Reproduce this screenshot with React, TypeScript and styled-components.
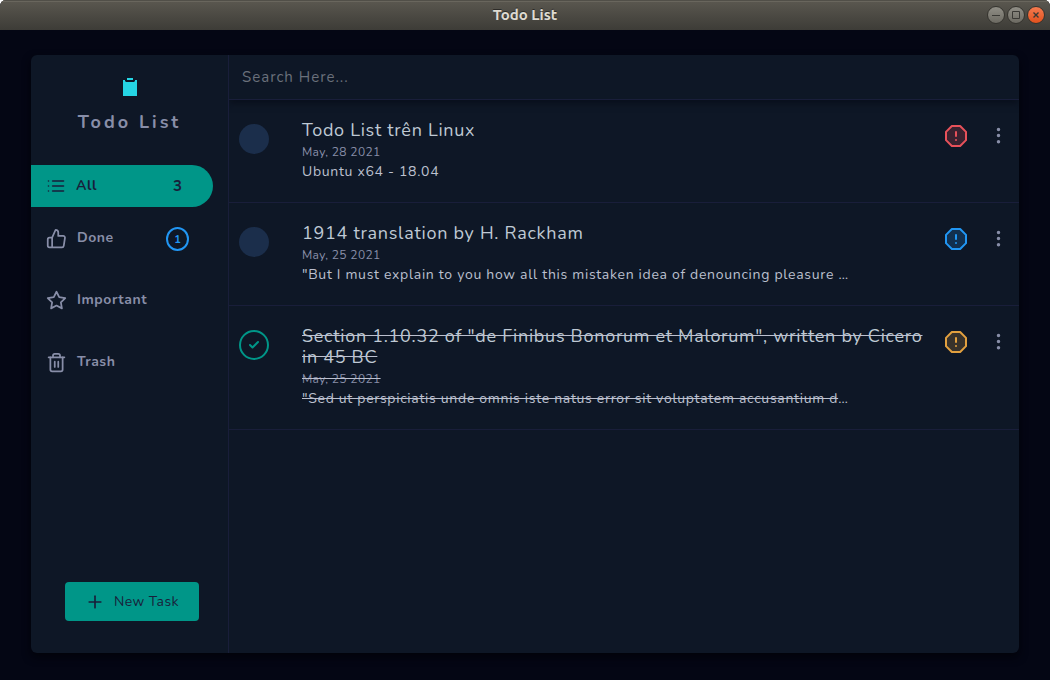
import React from "react";
import styled, { createGlobalStyle, css } from "styled-components";
import {
  FiAlertOctagon,
  FiCheck,
  FiList,
  FiMoreVertical,
  FiPlus,
  FiStar,
  FiThumbsUp,
  FiTrash2,
} from "react-icons/fi";

const GlobalStyle = createGlobalStyle`
  *, *::before, *::after { box-sizing: border-box; }
  body {
    margin: 0;
    background: #fff;
    font-family: Nunito, Lato, "Noto Sans", sans-serif;
    font-size: 14px;
    letter-spacing: 0.04em;
    color: #bcc0cf;
  }
  button, input { font: inherit; letter-spacing: inherit; color: inherit; }
  button { border: 0; padding: 0; background: none; cursor: pointer; }
  h1, h2, p, ul { margin: 0; padding: 0; }
  ul { list-style: none; }
`;

const Window = styled.div`
  display: flex;
  flex-direction: column;
  min-height: 100vh;
  border-radius: 6px 6px 0 0;
  overflow: hidden;
  background: #040614;
`;

const TitleBar = styled.header`
  display: grid;
  grid-template-columns: 1fr auto 1fr;
  align-items: center;
  height: 30px;
  padding: 0 5px;
  background: linear-gradient(#5b5850, #3d3c37);
  box-shadow: inset 0 1px #514f48, inset 0 2px #69665d;
`;

const WindowTitle = styled.span`
  grid-column: 2;
  font: bold 15px/30px Ubuntu, "Noto Sans", sans-serif;
  letter-spacing: 0;
  color: #dfdbd2;
  text-shadow: 0 -1px #2c2b28;
`;

const WindowControls = styled.div`
  display: flex;
  justify-content: flex-end;
  gap: 2px;
`;

const WindowButton = styled.button<{ $close?: boolean }>`
  display: grid;
  place-items: center;
  width: 18px;
  height: 18px;
  border: 1px solid #35342f;
  border-radius: 50%;
  color: #3a3935;
  background: ${(p) =>
    p.$close ? "linear-gradient(#f47b50, #e2511d)" : "linear-gradient(#908e86, #6c6a62)"};
`;

const Stage = styled.main`
  display: flex;
  flex: 1;
  padding: 25px 31px 27px;
`;

const Panel = styled.div`
  display: flex;
  flex: 1;
  min-width: 0;
  border-radius: 6px;
  overflow: hidden;
  background: #0e1726;
  box-shadow: 0 4px 8px #02030a;
`;

const Sidebar = styled.aside`
  display: flex;
  flex-direction: column;
  flex: 0 0 198px;
  border-right: 1px solid #191e3a;
`;

const Brand = styled.div`
  display: flex;
  flex-direction: column;
  align-items: center;
  gap: 14px;
  padding: 23px 0 9px;
`;

const BrandName = styled.h1`
  font-size: 18px;
  line-height: 24px;
  font-weight: 700;
  letter-spacing: 3px;
  color: #888ea8;
`;

const NavList = styled.ul`
  display: flex;
  flex-direction: column;
  gap: 20px;
  padding: 22px 15px 0 0;
  li:first-child { margin-bottom: -9px; }
`;

const NavLabel = styled.span`
  flex: 1;
  line-height: 20px;
  padding-bottom: 2px;
`;

const NavItem = styled.button<{ $active?: boolean }>`
  display: flex;
  align-items: center;
  width: 100%;
  height: 42px;
  padding: 0 24px 0 15px;
  gap: 10px;
  font-weight: 700;
  text-align: left;
  color: #888ea8;
  > svg { flex: none; margin-bottom: 1px; }
  ${(p) =>
    p.$active &&
    css`
      border-radius: 0 21px 21px 0;
      background: #009688;
      color: #191e3a;
      > svg { margin-bottom: 0; }
      ${NavLabel} { padding-bottom: 0; }
    `}
`;

const Count = styled.span`
  width: 23px;
  text-align: center;
  font-size: 15px;
  letter-spacing: 0;
`;

const Badge = styled.span`
  display: grid;
  place-items: center;
  width: 23px;
  height: 24px;
  border: 2px solid #2196f3;
  border-radius: 50%;
  font-size: 11px;
  letter-spacing: 0;
  color: #2196f3;
`;

const NewTask = styled.button`
  display: flex;
  align-items: center;
  justify-content: center;
  gap: 9px;
  width: 134px;
  height: 39px;
  margin: auto 0 32px 34px;
  border-radius: 4px;
  background: #009688;
  letter-spacing: 0.03em;
  color: #191e3a;
`;

const Content = styled.section`
  flex: 1;
  min-width: 0;
  overflow: hidden;
`;

const SearchBar = styled.div`
  height: 45px;
  border-bottom: 1px solid #191e3a;
  box-shadow: 0 4px 6px #0a101d;
`;

const SearchInput = styled.input`
  display: block;
  width: 100%;
  height: 44px;
  padding: 0 13px;
  border: 0;
  outline: 0;
  background: transparent;
  font-size: 15px;
  letter-spacing: 1px;
  &::placeholder { color: #6a707b; opacity: 1; }
`;

const TaskRow = styled.li`
  display: flex;
  align-items: flex-start;
  padding: 20px 10px 22px;
  border-bottom: 1px solid #191e3a;
`;

const TickBox = styled.label`
  display: grid;
  flex: none;
  margin: 4px 33px 0 0;
  > * { grid-area: 1 / 1; place-self: center; }
`;

const Tick = styled.input`
  appearance: none;
  width: 30px;
  height: 30px;
  margin: 0;
  border-radius: 50%;
  background: #1b2e4b;
  cursor: pointer;
  & + svg { visibility: hidden; color: #009688; pointer-events: none; }
  &:checked { border: 2px solid #009688; background: transparent; }
  &:checked + svg { visibility: visible; }
`;

const TaskBody = styled.div<{ $done: boolean }>`
  flex: 1;
  min-width: 0;
  text-decoration: ${(p) => (p.$done ? "line-through" : "none")};
`;

const TaskTitle = styled.h2`
  font-size: 18px;
  line-height: 21px;
  font-weight: 400;
  letter-spacing: 0.04em;
  color: #bfc9d4;
`;

const TaskDate = styled.p`
  font-size: 12px;
  line-height: 22px;
  letter-spacing: 0.03em;
  color: #888ea8;
`;

const TaskText = styled.p`
  line-height: 17px;
  letter-spacing: 0.05em;
`;

const Ellipsis = styled.span`
  display: inline-block;
`;

const Actions = styled.div`
  display: flex;
  flex: none;
  align-items: center;
  gap: 20px;
  margin: 4px 0 0 16px;
`;

const Priority = styled.button<{ $color: string }>`
  display: grid;
  color: ${(p) => p.$color};
  svg { fill: ${(p) => p.$color}33; }
`;

const MenuButton = styled.button`
  display: grid;
  padding-bottom: 1px;
  color: #888ea8;
`;

type Task = {
  title: string;
  date: string;
  text: string;
  cut?: boolean;
  done: boolean;
  color: string;
};

const tasks: Task[] = [
  {
    title: "Todo List trên Linux",
    date: "May, 28 2021",
    text: "Ubuntu x64 - 18.04",
    done: false,
    color: "#e7515a",
  },
  {
    title: "1914 translation by H. Rackham",
    date: "May, 25 2021",
    text: "\"But I must explain to you how all this mistaken idea of denouncing pleasure ",
    cut: true,
    done: false,
    color: "#2196f3",
  },
  {
    title: "Section 1.10.32 of \"de Finibus Bonorum et Malorum\", written by Cicero in 45 BC",
    date: "May, 25 2021",
    text: "\"Sed ut perspiciatis unde omnis iste natus error sit voluptatem accusantium d",
    cut: true,
    done: true,
    color: "#e2a03f",
  },
];

const ClipboardIcon = () => (
  <svg width="14" height="18" viewBox="0 0 14 18" fill="#25d5e4" aria-hidden="true">
    <path d="M4 0h6v2H4zM0 2h2v1l1 1h8l1-1V2h2v16H0z" />
  </svg>
);

const TaskItem = ({ task }: { task: Task }) => (
  <TaskRow>
    <TickBox>
      <Tick type="checkbox" defaultChecked={task.done} aria-label={task.title} />
      <FiCheck size={12} strokeWidth={4} />
    </TickBox>
    <TaskBody $done={task.done}>
      <TaskTitle>{task.title}</TaskTitle>
      <TaskDate>{task.date}</TaskDate>
      <TaskText>
        {task.text}
        {task.cut && <Ellipsis>…</Ellipsis>}
      </TaskText>
    </TaskBody>
    <Actions>
      <Priority $color={task.color} aria-label="Priority">
        <FiAlertOctagon size={24} />
      </Priority>
      <MenuButton aria-label="Task menu">
        <FiMoreVertical size={21} />
      </MenuButton>
    </Actions>
  </TaskRow>
);

export default function App() {
  return (
    <>
      <GlobalStyle />
      <Window>
        <TitleBar>
          <WindowTitle>Todo List</WindowTitle>
          <WindowControls>
            <WindowButton aria-label="Minimize">
              <svg width="8" height="8" stroke="currentColor"><path d="M0 4.5h8" /></svg>
            </WindowButton>
            <WindowButton aria-label="Maximize">
              <svg width="8" height="8" stroke="currentColor" fill="none"><path d="M.5.5h7v7h-7z" /></svg>
            </WindowButton>
            <WindowButton $close aria-label="Close">
              <svg width="6" height="6" stroke="currentColor" strokeWidth="1.4"><path d="M.5.5l5 5M5.5.5l-5 5" /></svg>
            </WindowButton>
          </WindowControls>
        </TitleBar>
        <Stage>
          <Panel>
            <Sidebar>
              <Brand>
                <ClipboardIcon />
                <BrandName>Todo List</BrandName>
              </Brand>
              <nav>
                <NavList>
                  <li>
                    <NavItem $active>
                      <FiList size={20} />
                      <NavLabel>All</NavLabel>
                      <Count>3</Count>
                    </NavItem>
                  </li>
                  <li>
                    <NavItem>
                      <FiThumbsUp size={21} />
                      <NavLabel>Done</NavLabel>
                      <Badge>1</Badge>
                    </NavItem>
                  </li>
                  <li>
                    <NavItem>
                      <FiStar size={21} />
                      <NavLabel>Important</NavLabel>
                    </NavItem>
                  </li>
                  <li>
                    <NavItem>
                      <FiTrash2 size={21} />
                      <NavLabel>Trash</NavLabel>
                    </NavItem>
                  </li>
                </NavList>
              </nav>
              <NewTask>
                <FiPlus size={20} />
                New Task
              </NewTask>
            </Sidebar>
            <Content>
              <SearchBar>
                <SearchInput type="text" placeholder="Search Here..." aria-label="Search tasks" />
              </SearchBar>
              <ul>
                {tasks.map((task) => (
                  <TaskItem key={task.title} task={task} />
                ))}
              </ul>
            </Content>
          </Panel>
        </Stage>
      </Window>
    </>
  );
}
